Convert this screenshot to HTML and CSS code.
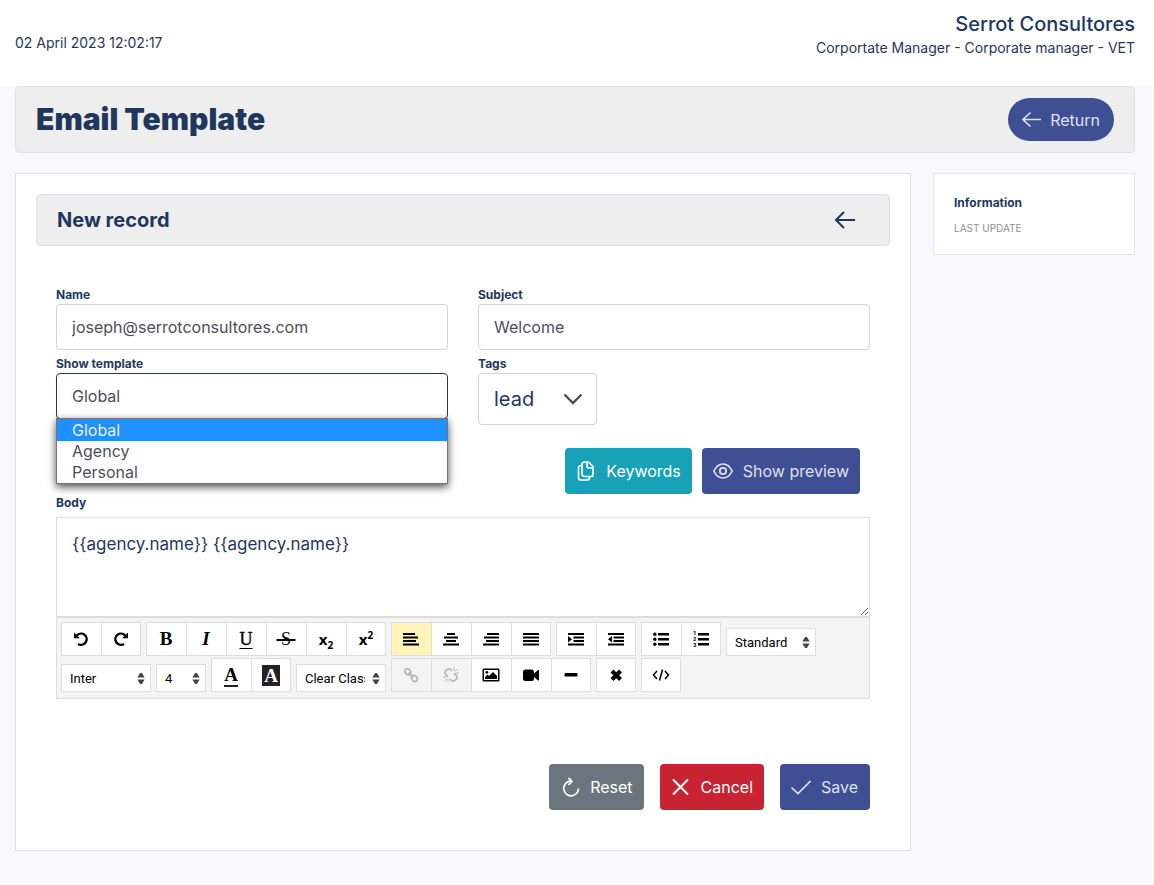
FILE: index.html
```html
<!DOCTYPE html>
<html lang="en">
<head>
<meta charset="utf-8">
<meta name="viewport" content="width=device-width, initial-scale=1">
<title>Email Template</title>
<link rel="stylesheet" href="styles.css">
</head>
<body>
<header class="topbar">
  <time class="clock">02 April 2023 12:02:17</time>
  <div class="account">
    <div class="account-name">Serrot Consultores</div>
    <div class="account-role">Corportate Manager - Corporate manager - VET</div>
  </div>
</header>
<main class="page">
  <div class="titlebar">
    <h1>Email Template</h1>
    <button type="button" class="btn btn-primary btn-pill"><svg class="icon" viewBox="0 0 20 20"><path d="M8.500 2.500 1 9.500l7.500 7M1 9.500h18"/></svg>Return</button>
  </div>
  <div class="columns">
    <section class="card">
      <div class="card-head">
        <h2>New record</h2>
        <button type="button" class="back" aria-label="Back"><svg viewBox="0 0 22 20"><path d="M10 2 2 10l8 8M2 10h19"/></svg></button>
      </div>
      <form class="form">
        <div class="fields">
          <div class="field">
            <label for="name">Name</label>
            <input id="name" class="control" type="text" value="joseph@serrotconsultores.com">
          </div>
          <div class="field">
            <label for="subject">Subject</label>
            <input id="subject" class="control" type="text" value="Welcome">
          </div>
          <div class="field">
            <label for="show">Show template</label>
            <div class="dropdown">
              <select id="show" class="control control-open"><option>Global</option><option>Agency</option><option>Personal</option></select>
              <ul class="options" role="listbox" aria-label="Show template">
                <li class="active" role="option" aria-selected="true">Global</li>
                <li role="option">Agency</li>
                <li role="option">Personal</li>
              </ul>
            </div>
          </div>
          <div class="field">
            <label for="tags">Tags</label>
            <div class="tags">
              <select id="tags" class="control control-large"><option>lead</option></select>
              <svg class="chevron" viewBox="0 0 20 12"><path d="M1.500 1.500 10 10l8.500-8.500"/></svg>
            </div>
          </div>
        </div>
        <div class="tools">
          <button type="button" class="btn btn-info"><svg class="icon" viewBox="0 0 20 20"><path d="M8.500 1h4l4.500 4.500v8a2 2 0 0 1-2 2H8.500a2.500 2.500 0 0 1-2.500-2.500V3.500A2.500 2.500 0 0 1 8.500 1zM11 1v4a2 2 0 0 0 2 2h4M6 4.500H5a2.500 2.500 0 0 0-2.500 2.500v9.500A2.500 2.500 0 0 0 5 19h6a2.500 2.500 0 0 0 2.500-2.500v-1"/></svg>Keywords</button>
          <button type="button" class="btn btn-primary"><svg class="icon" viewBox="0 0 20 20"><path d="M.800 10C3 5.500 6.300 3 10 3s7 2.500 9.200 7c-2.200 4.500-5.500 7-9.200 7S3 14.500.800 10z"/><circle cx="10" cy="10" r="3.200"/></svg>Show preview</button>
        </div>
        <label for="body">Body</label>
        <div class="editor">
          <textarea id="body" class="editor-text">{{agency.name}} {{agency.name}}</textarea>
          <div class="toolbar">
            <div class="group">
              <button type="button" aria-label="Undo"><svg viewBox="0 0 16 16"><path class="line" d="M3.800 4.500A5.600 5.600 0 1 1 5 12.900"/><path d="M1 1.500v5.800h5.800z"/></svg></button>
              <button type="button" aria-label="Redo"><svg viewBox="0 0 16 16"><path class="line" d="M12.200 4.500A5.600 5.600 0 1 0 11 12.900"/><path d="M15 1.500v5.800H9.200z"/></svg></button>
            </div>
            <div class="group serif">
              <button type="button">B</button>
              <button type="button"><em>I</em></button>
              <button type="button" class="under"><u>U</u></button>
              <button type="button" class="strike"><s>&nbsp;S&nbsp;</s></button>
              <button type="button" class="script">x<sub>2</sub></button>
              <button type="button" class="script">x<sup>2</sup></button>
            </div>
            <div class="group">
              <button type="button" class="on" aria-label="Align left"><svg viewBox="0 0 16 14"><path d="M0 1h12v2H0zM0 4.500h15v2H0zM0 8h13v2H0zM0 11.500h16v2H0z"/></svg></button>
              <button type="button" aria-label="Align center"><svg viewBox="0 0 16 14"><path d="M4 1h8v2H4zM1 4.500h14v2H1zM3 8h10v2H3zM0 11.500h16v2H0z"/></svg></button>
              <button type="button" aria-label="Align right"><svg viewBox="0 0 16 14"><path d="M4 1h12v2H4zM1 4.500h15v2H1zM3 8h13v2H3zM0 11.500h16v2H0z"/></svg></button>
              <button type="button" aria-label="Justify"><svg viewBox="0 0 16 14"><path d="M0 1h16v2H0zM0 4.500h16v2H0zM0 8h16v2H0zM0 11.500h16v2H0z"/></svg></button>
            </div>
            <div class="group">
              <button type="button" aria-label="Indent"><svg viewBox="0 0 16 14"><path d="M0 1h16v2H0zM5.500 4.500H16v2H5.500zM5.500 8H16v2H5.500zM0 11.500h16v2H0zM0 4l4 3.250L0 10.500z"/></svg></button>
              <button type="button" aria-label="Outdent"><svg viewBox="0 0 16 14"><path d="M0 1h16v2H0zM5.500 4.500H16v2H5.500zM5.500 8H16v2H5.500zM0 11.500h16v2H0zM4 4 0 7.250l4 3.250z"/></svg></button>
            </div>
            <div class="group">
              <button type="button" aria-label="Bulleted list"><svg viewBox="0 0 16 14"><path d="M5 1h11v2.400H5zM5 6h11v2.400H5zM5 11h11v2.400H5z"/><circle cx="1.800" cy="2.200" r="1.700"/><circle cx="1.800" cy="7.200" r="1.700"/><circle cx="1.800" cy="12.200" r="1.700"/></svg></button>
              <button type="button" aria-label="Numbered list"><svg class="tall" viewBox="0 0 16 18"><path d="M5 3h11v2.400H5zM5 8h11v2.400H5zM5 13h11v2.400H5z"/><text x="0" y="5">1</text><text x="0" y="11">2</text><text x="0" y="17">3</text></svg></button>
            </div>
            <div class="pick pick-wide"><select aria-label="Block style"><option>Standard</option></select><svg viewBox="0 0 8 12"><path d="M0 5 3 0h2l3 5zM0 7l3 5h2l3-5z"/></svg></div>
            <div class="pick pick-wide"><select aria-label="Font"><option>Inter</option></select><svg viewBox="0 0 8 12"><path d="M0 5 3 0h2l3 5zM0 7l3 5h2l3-5z"/></svg></div>
            <div class="pick"><select aria-label="Font size"><option>4</option></select><svg viewBox="0 0 8 12"><path d="M0 5 3 0h2l3 5zM0 7l3 5h2l3-5z"/></svg></div>
            <div class="group serif">
              <button type="button" aria-label="Text color"><span class="ink">A</span></button>
              <button type="button" aria-label="Background color"><span class="fill">A</span></button>
            </div>
            <div class="pick pick-wide"><select aria-label="Custom class"><option>Clear Class</option></select><svg viewBox="0 0 8 12"><path d="M0 5 3 0h2l3 5zM0 7l3 5h2l3-5z"/></svg></div>
            <div class="group">
              <button type="button" disabled aria-label="Link"><svg viewBox="0 0 16 16"><g class="thin"><rect x="1.500" y="2.200" width="6.500" height="5" rx="2.500" transform="rotate(45 4.700 4.700)"/><rect x="8" y="8.800" width="6.500" height="5" rx="2.500" transform="rotate(45 11.300 11.300)"/><path d="m5.500 5.500 5 5"/></g></svg></button>
              <button type="button" disabled aria-label="Unlink"><svg viewBox="0 0 16 16"><g class="thin"><path d="M9 4 7.500 2.500a2.200 2.200 0 0 0-3.200 0L2.600 4.200a2.200 2.200 0 0 0 0 3.200L5 9.500M7 12l1.500 1.500a2.200 2.200 0 0 0 3.200 0l1.700-1.700a2.200 2.200 0 0 0 0-3.200L11 6.500"/></g><path class="hair" d="M11 4V.500M12 4.500 14.500 2M12.500 6H16M5 12v3.500M4 11.500 1.500 14M3.500 10H0"/></svg></button>
              <button type="button" aria-label="Image"><svg class="wide" viewBox="0 0 18 14"><path fill-rule="evenodd" d="M1.500.5h15a1 1 0 0 1 1 1v11a1 1 0 0 1-1 1h-15a1 1 0 0 1-1-1v-11a1 1 0 0 1 1-1zM2 2v10h14V2zM3 11V9l2.500-2.500L7 8l4-4 4 4v3z"/><circle cx="4.800" cy="4.300" r="1.400"/></svg></button>
              <button type="button" aria-label="Video"><svg viewBox="0 0 16 14"><path d="M2.500 1.500h6A2.500 2.500 0 0 1 11 4v1.500l4-3.500h1v10.500h-1L11 9v1.500A2.500 2.500 0 0 1 8.500 13h-6A2.500 2.500 0 0 1 0 10.500V4a2.500 2.500 0 0 1 2.500-2.500z"/></svg></button>
              <button type="button" aria-label="Horizontal line"><svg viewBox="0 0 16 14"><rect x="1.500" y="5" width="13" height="3.600" rx="1"/></svg></button>
            </div>
            <div class="group"><button type="button" aria-label="Clear formatting"><svg viewBox="0 0 16 16"><path class="heavy" d="m4 4 8.500 8.500M12.500 4 4 12.500"/></svg></button></div>
            <div class="group"><button type="button" aria-label="HTML code"><svg class="wide" viewBox="0 0 18 14"><path class="mid" d="M5 3 1.500 7 5 11M13 3l3.500 4L13 11M10.500 1.500l-3 11"/></svg></button></div>
          </div>
        </div>
        <div class="actions">
          <button type="reset" class="btn btn-secondary"><svg class="icon" viewBox="0 0 20 20"><path d="M8.500 1 12 4.200 8.500 8M12 4.200H9.500a7.400 7.400 0 1 0 9 7.300"/></svg>Reset</button>
          <button type="button" class="btn btn-danger"><svg class="icon icon-bold" viewBox="0 0 20 20"><path d="m2 2.500 15 15M17 2.500l-15 15"/></svg>Cancel</button>
          <button type="button" class="btn btn-primary"><svg class="icon" viewBox="0 0 20 20"><path d="M.500 10.500 7 16.500 19.500 4"/></svg>Save</button>
        </div>
      </form>
    </section>
    <aside class="info">
      <h3>Information</h3>
      <p>LAST UPDATE</p>
    </aside>
  </div>
</main>
</body>
</html>
```
FILE: styles.css
```css
* { box-sizing: border-box; }
body {
  margin: 0;
  background: #f8f9fb;
  color: #1f375e;
  font-family: Inter, sans-serif;
  font-size: 14px;
  line-height: 20px;
}
button, input, select, textarea { font: inherit; color: inherit; }
h1, h2, h3, p, ul { margin: 0; padding: 0; }
svg { fill: currentColor; flex: none; }

.topbar {
  display: flex;
  justify-content: space-between;
  align-items: center;
  min-height: 86px;
  padding: 0 19px 0 15px;
  background: #fff;
}
.account { padding-bottom: 18px; text-align: right; }
.account-name { font-size: 20px; font-weight: 500; line-height: 28px; }

.page { padding: 0 19px 34px 15px; }
.titlebar, .card-head {
  display: flex;
  align-items: center;
  justify-content: space-between;
  border: 1px solid #dee2e6;
  border-radius: 4px;
  background: #eee;
  padding: 11px 20px;
}
.titlebar { margin-bottom: 20px; }
h1 { padding-bottom: 2px; font-size: 30px; font-weight: 900; line-height: 36px; }
h2 { font-size: 20px; font-weight: 700; line-height: 28px; }

.columns {
  display: grid;
  grid-template-columns: minmax(0, 1fr) 202px;
  gap: 22px;
  align-items: start;
}
.card { border: 1px solid #dee2e6; background: #fff; padding: 20px 20px 40px; }
.back { display: flex; border: 0; padding: 0; margin-right: 13px; background: none; }
.back svg { width: 22px; height: 20px; fill: none; stroke: currentColor; stroke-width: 2; }
.info { border: 1px solid #e2e7f1; background: #fff; padding: 20px; }
.info h3 { font-size: 12px; font-weight: 700; line-height: 18px; }
.info p { margin-top: 10px; font-size: 10px; line-height: 12px; color: #8f8f8f; }

.form { padding: 40px 20px 0; }
label { display: block; font-size: 12px; font-weight: 700; line-height: 18px; }
.fields { display: grid; grid-template-columns: 1fr 1fr; gap: 5px 30px; }
.control {
  display: block;
  width: 100%;
  height: 46px;
  border: 1px solid #ced4da;
  border-radius: 4px;
  background: #fff;
  color: #495057;
  padding: 0 15px;
  font-size: 16px;
  appearance: none;
}
.control-open { border-color: #1f375e; }
.control-large { height: 52px; font-size: 20px; color: #1f375e; }
.dropdown { position: relative; }
.options {
  position: absolute;
  top: 45px;
  left: 0;
  right: 0;
  border: 1px solid #767676;
  background: #fff;
  box-shadow: 0 3px 8px rgba(0, 0, 0, .7);
  color: #495057;
  font-size: 16px;
  line-height: 21px;
  list-style: none;
}
.options li { padding: 0 15px; }
.options .active { padding-top: 1px; background: #1e90ff; color: #eee; }
.tags { position: relative; width: 119px; }
.chevron {
  position: absolute;
  top: 20px;
  right: 14px;
  width: 20px;
  height: 12px;
  fill: none;
  stroke: #495057;
  stroke-width: 2.4;
  pointer-events: none;
}

.btn {
  display: inline-flex;
  align-items: center;
  gap: 10px;
  height: 46px;
  border: 0;
  border-radius: 4px;
  padding: 0 11px;
  color: #fff;
  font-size: 16px;
}
.btn .icon { width: 20px; height: 20px; fill: none; stroke: currentColor; stroke-width: 1.7; }
.btn .icon-bold { stroke-width: 2; }
.btn-primary { background: #3f4f93; color: #dfe1ef; }
.btn-info { background: #17a2b8; }
.btn-secondary { background: #6c757d; }
.btn-danger { background: #c82333; }
.btn-pill { height: 43px; border-radius: 22px; padding: 0 14px; gap: 8px; }
.tools { display: flex; justify-content: flex-end; gap: 10px; padding: 23px 10px 0; }
.actions { display: flex; justify-content: flex-end; gap: 16px; margin-top: 65px; }
.actions .btn { min-width: 90px; }

.editor { margin-top: 5px; border: 1px solid #ddd; }
.editor-text {
  display: block;
  width: 100%;
  height: 99px;
  border: 0;
  border-bottom: 1px solid #ddd;
  padding: 16px 15px;
  font-size: 17px;
  resize: vertical;
}
.toolbar {
  display: flex;
  flex-wrap: wrap;
  align-items: flex-end;
  gap: 2px 5px;
  border-top: 1px solid #ddd;
  background: #f4f4f4;
  padding: 4px 4px 6px;
  color: #000;
}
.group { display: flex; }
.group button {
  display: flex;
  align-items: center;
  justify-content: center;
  width: 40px;
  height: 34px;
  border: 1px solid #ddd;
  border-right: 0;
  padding: 0 1px 0 0;
  background: #fff;
}
.group button:last-child { border-right: 1px solid #ddd; padding: 0; }
.group .on { background: #fff5b9; }
.group button:disabled { background: #f4f4f4; color: #b5b5b5; }
.group svg { width: 16px; height: 16px; }
.group .wide { width: 18px; }
.group .tall { height: 18px; }
.group text { font: bold 6px Roboto, sans-serif; }
.line, .heavy, .thin, .hair, .mid { fill: none; stroke: currentColor; }
.line { stroke-width: 2.4; }
.heavy { stroke-width: 4; }
.thin { stroke-width: 1.7; }
.hair { stroke-width: 1; }
.mid { stroke-width: 1.5; }
.serif { font-family: "Liberation Serif", serif; font-size: 19px; font-weight: 700; }
.serif .under { font-size: 18px; font-weight: 400; -webkit-text-stroke: 0.4px; }
.under u { text-underline-offset: 3px; }
.serif .strike { font-size: 18px; font-weight: 400; }
.strike s { text-decoration-thickness: 2px; }
.serif .script { font-family: "Noto Sans", sans-serif; font-size: 15px; }
.script sub, .script sup { font-size: 10px; line-height: 10px; }
.script sub { align-self: flex-end; padding-bottom: 5px; }
.script sup { align-self: flex-start; padding-top: 7px; }
.ink { border-bottom: 2px solid #222; line-height: 21px; }
.fill { background: #222; color: #fff; padding: 0 2px; line-height: 21px; }
.pick { position: relative; width: 50px; }
.pick-wide { width: 90px; }
.pick select {
  display: block;
  width: 100%;
  height: 28px;
  border: 1px solid #ddd;
  border-radius: 0;
  background: #fff;
  padding: 1px 20px 0 8px;
  font-family: Roboto, sans-serif;
  font-size: 13px;
  appearance: none;
}
.pick svg {
  position: absolute;
  top: 9px;
  right: 6px;
  width: 8px;
  height: 11px;
  fill: #444;
  pointer-events: none;
}
```
